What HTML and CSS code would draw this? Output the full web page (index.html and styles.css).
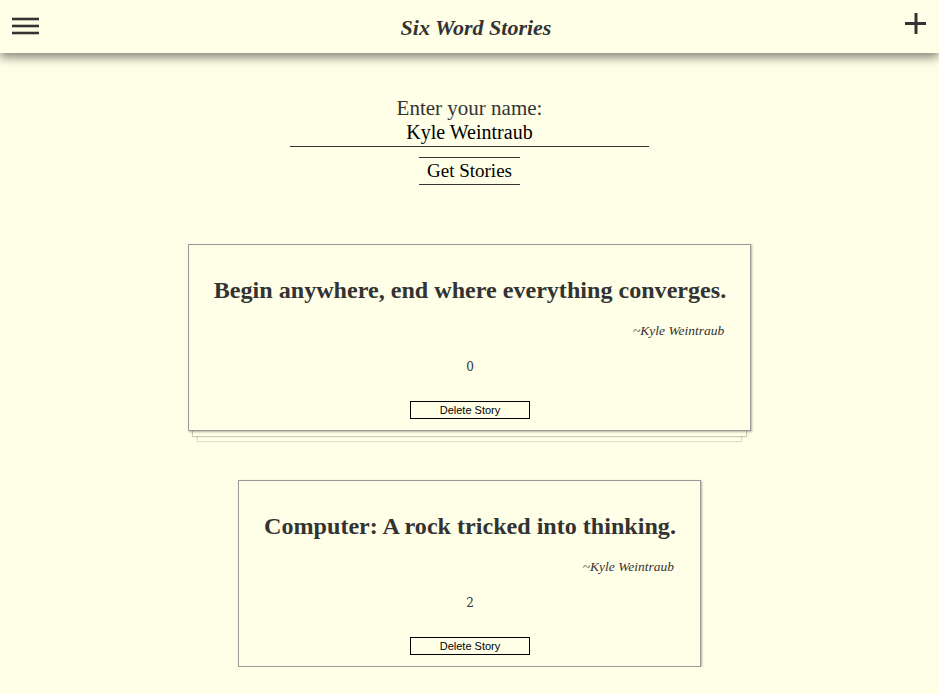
FILE: index.html
```html
<!DOCTYPE html>
<html>
<head>
<meta charset="utf-8">
<link rel="stylesheet" href="styles.css">
</head>
<body>
<header class="topbar">
  <button class="icon-btn menu" aria-label="Menu">
    <svg width="27" height="18" viewBox="0 0 27 18"><g stroke="#333" stroke-width="2.6"><line x1="0" y1="2" x2="27" y2="2"/><line x1="0" y1="9" x2="27" y2="9"/><line x1="0" y1="16" x2="27" y2="16"/></g></svg>
  </button>
  <h1 class="brand">Six Word Stories</h1>
  <button class="icon-btn add" aria-label="Add">
    <svg width="22" height="22" viewBox="0 0 22 22"><g stroke="#333" stroke-width="3"><line x1="11" y1="0" x2="11" y2="21"/><line x1="0" y1="10.5" x2="21" y2="10.5"/></g></svg>
  </button>
</header>

<main class="content">
  <section class="name-form">
    <label class="name-label" for="name">Enter your name:</label>
    <input class="name-input" id="name" type="text" value="Kyle Weintraub">
    <button class="get-btn">Get Stories</button>
  </section>

  <section class="stories">
    <article class="story">
      <h2 class="story-text">Begin anywhere, end where everything converges.</h2>
      <p class="story-author">~Kyle Weintraub</p>
      <p class="story-count">0</p>
      <button class="delete-btn">Delete Story</button>
    </article>
    <article class="story">
      <h2 class="story-text">Computer: A rock tricked into thinking.</h2>
      <p class="story-author">~Kyle Weintraub</p>
      <p class="story-count">2</p>
      <button class="delete-btn">Delete Story</button>
    </article>
  </section>
</main>
</body>
</html>
```

FILE: styles.css
```css
html, body {
  margin: 0;
  padding: 0;
  background: #fffee6;
  color: #333;
}

body {
  font-family: "Liberation Serif", "Times New Roman", serif;
  overflow: hidden;
}

.topbar {
  height: 53px;
  background: #fffee6;
  box-shadow: 0 4px 10px rgba(0, 0, 0, 0.5);
  display: flex;
  align-items: center;
  justify-content: space-between;
  padding: 0 12px;
  position: relative;
  z-index: 2;
}

.icon-btn {
  background: none;
  border: 0;
  padding: 0;
  display: flex;
  align-items: center;
  cursor: pointer;
}

.menu { margin-top: -1px; }
.add { margin-top: -6px; }

.brand {
  margin: 0;
  font-family: "Liberation Serif", serif;
  font-style: italic;
  font-weight: bold;
  font-size: 22px;
  color: #333;
  margin-top: 2px;
  margin-left: 8px;
}

.content {
  display: flex;
  flex-direction: column;
  align-items: center;
}

.name-form {
  display: flex;
  flex-direction: column;
  align-items: center;
  padding-top: 43px;
}

.name-label {
  font-size: 21px;
  line-height: 24px;
  color: #333;
}

.name-input {
  width: 359px;
  box-sizing: border-box;
  background: transparent;
  border: 0;
  border-bottom: 1px solid #333;
  font-family: "Liberation Serif", serif;
  font-size: 20px;
  line-height: 24px;
  text-align: center;
  color: #000;
  padding: 0 0 2px;
  margin-top: 0;
  outline: none;
}

.get-btn {
  margin-top: 10px;
  width: 101px;
  background: transparent;
  border: 0;
  border-top: 1px solid #333;
  border-bottom: 1px solid #333;
  font-family: "Liberation Serif", serif;
  font-size: 19px;
  line-height: 24px;
  padding: 1px 0 1px;
  color: #000;
}

.stories {
  display: flex;
  flex-direction: column;
  align-items: center;
  gap: 49px;
  margin-top: 59px;
}

.story {
  background: #fffee6;
  border: 1px solid #999;
  padding: 30px 24px 11px 25px;
  text-align: center;
  box-shadow:
    1px 1px 2px rgba(0, 0, 0, 0.3),
    0 10px 0 -5px #fffee6,
    0 10px 1px -4px rgba(0, 0, 0, 0.2),
    0 20px 0 -10px #fffee6,
    0 20px 1px -9px rgba(0, 0, 0, 0.12);
}

.story-text {
  margin: 0;
  font-family: "Liberation Serif", serif;
  font-weight: bold;
  font-size: 24.1px;
  line-height: 30px;
  color: #333;
}

.story-author {
  margin: 18px 0 0;
  padding-right: 2px;
  text-align: right;
  font-style: italic;
  font-size: 13.5px;
  line-height: 16px;
  color: #333;
}

.story-count {
  margin: 19px 0 0;
  font-family: "DejaVu Serif", serif;
  font-size: 12px;
  line-height: 18px;
  color: #333;
}

.delete-btn {
  margin-top: 25px;
  width: 120px;
  height: 18px;
  background: transparent;
  border: 1px solid #000;
  font-family: "Liberation Sans", Arial, sans-serif;
  font-size: 11px;
  line-height: 14px;
  padding: 0;
  color: #000;
}
```
